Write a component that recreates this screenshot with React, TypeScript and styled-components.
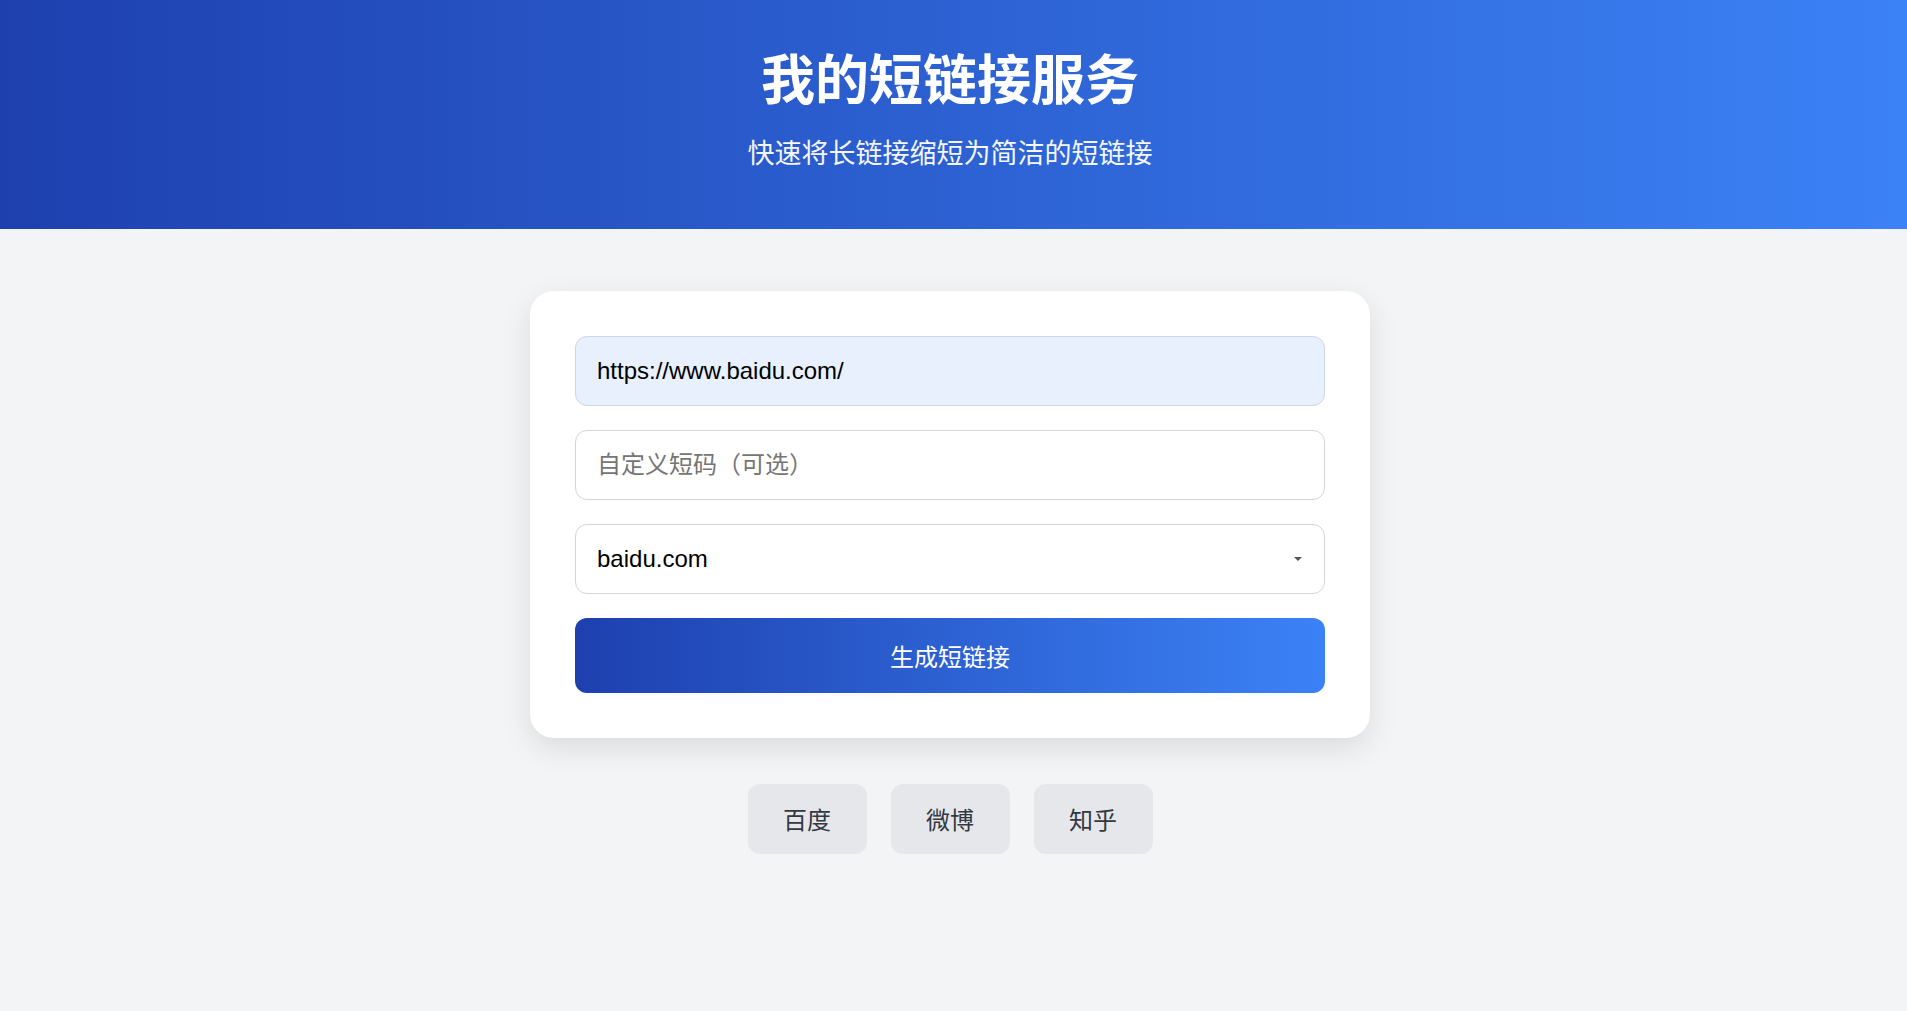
import React from "react";
import styled, { createGlobalStyle } from "styled-components";

const Global = createGlobalStyle`
  html, body { margin: 0; padding: 0; }
  body {
    background: #f3f4f6;
    font-family: "Liberation Sans", "Noto Sans CJK SC", sans-serif;
    min-height: 1011px;
  }
  * { box-sizing: border-box; }
`;

const Page = styled.div`
  min-height: 1011px;
  background: #f3f4f6;
`;

const Header = styled.header`
  background: linear-gradient(90deg, #1e40af 0%, #3b82f6 100%);
  color: #fff;
  text-align: center;
  padding: 45px 7px 56.5px 0;
`;

const Title = styled.h1`
  margin: 0;
  font-family: "Noto Sans CJK SC", sans-serif;
  font-weight: 700;
  font-size: 54px;
  line-height: 64.8px;
`;

const Subtitle = styled.p`
  margin: 22px 0 0;
  font-family: "Noto Sans CJK SC", sans-serif;
  font-weight: 400;
  font-size: 27px;
  line-height: 40.5px;
  opacity: 0.95;
`;

const Main = styled.main`
  display: flex;
  flex-direction: column;
  align-items: center;
  padding: 62px 7px 0 0;
`;

const Card = styled.div`
  width: 840px;
  background: #fff;
  border-radius: 24px;
  padding: 45px;
  box-shadow: 0 10px 30px rgba(0, 0, 0, 0.1);
  display: flex;
  flex-direction: column;
  gap: 24px;
`;

const fieldCss = `
  width: 100%;
  height: 70px;
  border: 1px solid #d1d5db;
  border-radius: 12px;
  padding: 0 21px;
  font-family: "Liberation Sans", "Noto Sans CJK SC", sans-serif;
  font-size: 24px;
  color: #000;
  outline: none;
`;

const Input = styled.input<{ $filled?: boolean }>`
  ${fieldCss}
  background: ${(p) => (p.$filled ? "#e8f0fe" : "#fff")};
  border-color: ${(p) => (p.$filled ? "#cdd6e4" : "#d1d5db")};
  &::placeholder {
    color: #757575;
  }
`;

const SelectWrap = styled.div`
  position: relative;
  width: 100%;
`;

const Select = styled.select`
  ${fieldCss}
  appearance: none;
  background: #fff;
  padding-right: 48px;
`;

const Arrow = styled.span`
  position: absolute;
  right: 23px;
  top: 50%;
  margin-top: -2px;
  width: 0;
  height: 0;
  border-left: 4px solid transparent;
  border-right: 4px solid transparent;
  border-top: 4px solid #555;
  pointer-events: none;
`;

const Submit = styled.button`
  width: 100%;
  height: 75px;
  border: none;
  border-radius: 12px;
  background: linear-gradient(90deg, #1e40af 0%, #3b82f6 100%);
  color: #fff;
  font-family: "Noto Sans CJK SC", sans-serif;
  font-size: 24px;
  cursor: pointer;
`;

const Links = styled.div`
  display: flex;
  gap: 24px;
  margin-top: 46px;
`;

const LinkButton = styled.button`
  height: 70px;
  padding: 0 35.5px;
  border: none;
  border-radius: 12px;
  background: #e5e7eb;
  color: #333842;
  font-family: "Noto Sans CJK SC", sans-serif;
  font-size: 24px;
  cursor: pointer;
`;

export default function App() {
  return (
    <Page>
      <Global />
      <Header>
        <Title>我的短链接服务</Title>
        <Subtitle>快速将长链接缩短为简洁的短链接</Subtitle>
      </Header>
      <Main>
        <Card>
          <Input $filled defaultValue="https://www.baidu.com/" />
          <Input placeholder="自定义短码（可选）" />
          <SelectWrap>
            <Select defaultValue="baidu.com">
              <option value="baidu.com">baidu.com</option>
            </Select>
            <Arrow />
          </SelectWrap>
          <Submit>生成短链接</Submit>
        </Card>
        <Links>
          <LinkButton>百度</LinkButton>
          <LinkButton>微博</LinkButton>
          <LinkButton>知乎</LinkButton>
        </Links>
      </Main>
    </Page>
  );
}
